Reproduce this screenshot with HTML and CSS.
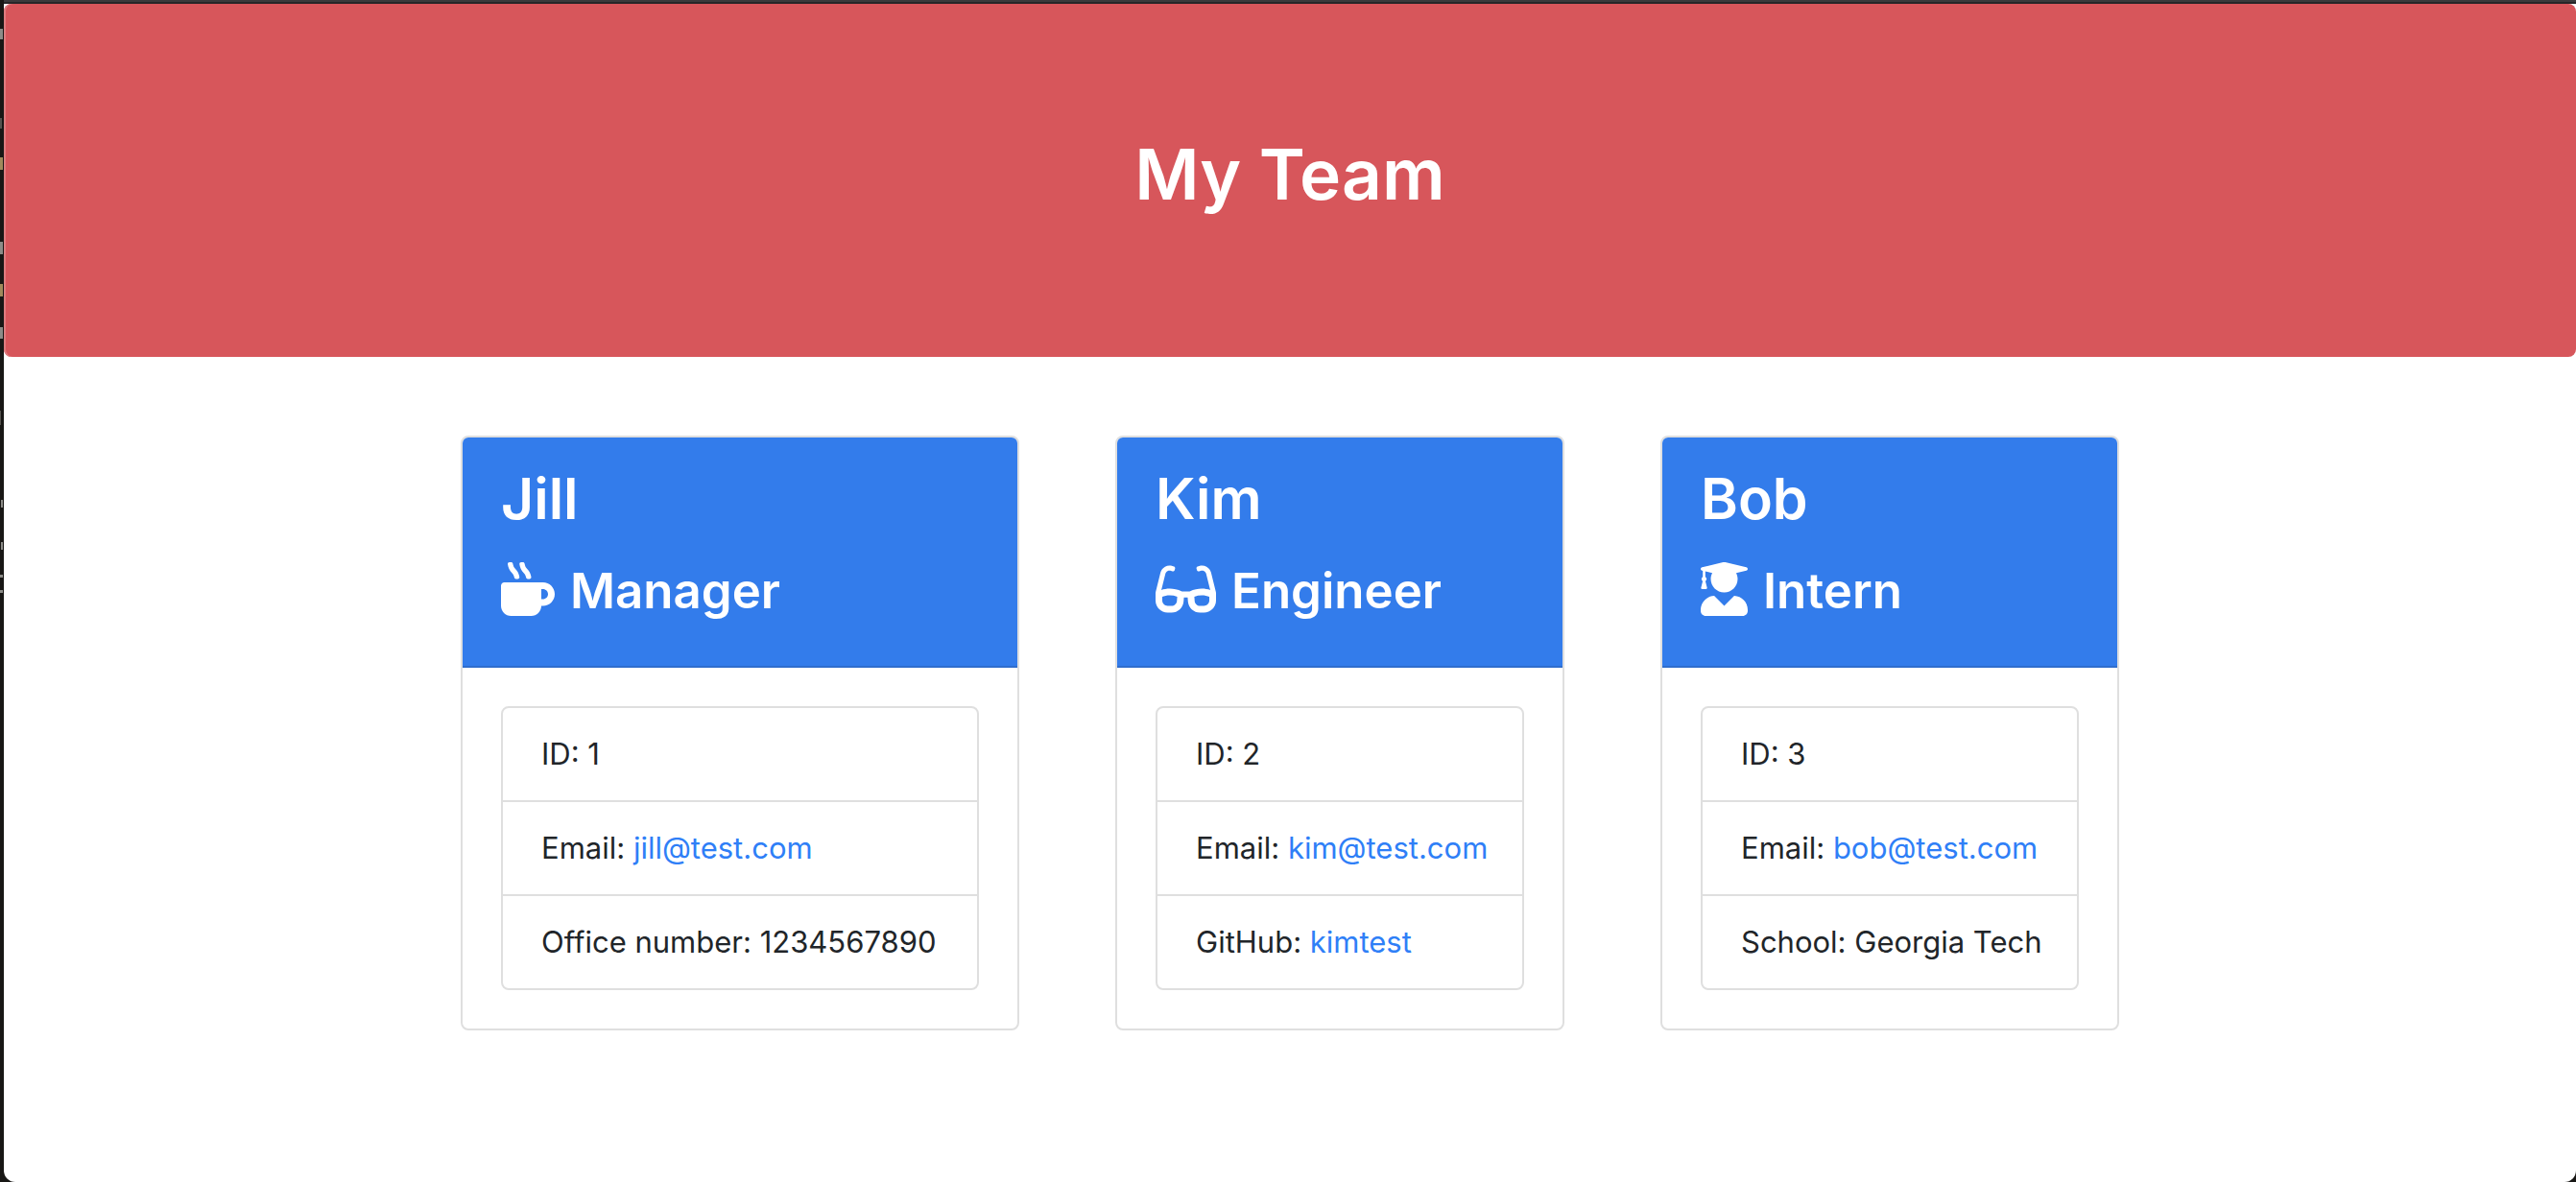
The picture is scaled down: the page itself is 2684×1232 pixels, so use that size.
FILE: index.html
```html
<!DOCTYPE html>
<html lang="en">
<head>
<meta charset="utf-8">
<meta name="viewport" content="width=device-width, initial-scale=1">
<title>My Team</title>
<link rel="stylesheet" href="styles.css">
</head>
<body>
<div class="page">
  <header class="banner">
    <h1 class="banner-title">My Team</h1>
  </header>
  <main class="team">
    <article class="card card-manager">
      <div class="card-header">
        <h2 class="name">Jill</h2>
        <h3 class="role"><svg class="icon" viewBox="0 0 512 512" aria-hidden="true"><path d="M127.1 146.5c1.3 7.7 8 13.5 16 13.5h16.5c9.8 0 17.6-8.5 16.3-18-3.8-28.2-16.4-54.2-36.6-74.7-14.4-14.7-23.6-33.3-26.4-53.5C111.8 5.9 105 0 96.8 0H80.4C70.6 0 63 8.5 64.1 18c3.9 31.9 18 61.3 40.6 84.4 12 12.2 19.7 27.5 22.4 44.1zm112 0c1.3 7.7 8 13.5 16 13.5h16.5c9.8 0 17.6-8.5 16.3-18-3.8-28.2-16.4-54.2-36.6-74.7-14.4-14.7-23.6-33.3-26.4-53.5C223.8 5.9 217 0 208.8 0h-16.4c-9.8 0-17.5 8.5-16.3 18 3.9 31.9 18 61.3 40.6 84.4 12 12.2 19.7 27.5 22.4 44.1zM400 192H32c-17.7 0-32 14.3-32 32v192c0 53 43 96 96 96h192c53 0 96-43 96-96h16c61.8 0 112-50.2 112-112s-50.2-112-112-112zm0 160h-16v-96h16c26.5 0 48 21.5 48 48s-21.5 48-48 48z"/></svg>Manager</h3>
      </div>
      <ul class="details">
        <li class="detail">ID: 1</li>
        <li class="detail">Email: <a class="link" href="mailto:jill@test.com">jill@test.com</a></li>
        <li class="detail">Office number: 1234567890</li>
      </ul>
    </article>
    <article class="card card-engineer">
      <div class="card-header">
        <h2 class="name">Kim</h2>
        <h3 class="role"><svg class="icon" viewBox="0 0 576 512" aria-hidden="true"><path d="M574.1 280.37L528.75 98.66c-5.91-23.7-21.59-44.05-43-55.81-21.44-11.73-46.97-14.11-70.19-6.33l-15.25 5.08c-8.39 2.79-12.92 11.86-10.12 20.24l5.06 15.18c2.79 8.38 11.85 12.91 20.23 10.12l13.18-4.39c10.87-3.62 23-3.57 33.16 1.73 10.29 5.37 17.57 14.56 20.37 25.82l38.46 153.82c-22.19-6.81-49.79-12.46-81.2-12.46-34.77 0-73.98 7.02-114.85 26.74h-73.18c-40.87-19.74-80.08-26.75-114.86-26.75-31.42 0-59.02 5.65-81.21 12.46l38.46-153.83c2.79-11.25 10.09-20.45 20.38-25.81 10.16-5.3 22.28-5.35 33.15-1.73l13.17 4.39c8.38 2.79 17.44-1.74 20.23-10.12l5.06-15.18c2.8-8.38-1.73-17.45-10.12-20.24l-15.25-5.08c-23.22-7.78-48.75-5.41-70.19 6.33-21.41 11.77-37.09 32.11-43 55.8L1.9 280.37A64.218 64.218 0 0 0 0 295.86v70.25C0 429.01 51.58 480 115.2 480h37.12c60.28 0 110.37-45.94 114.88-105.37l2.93-38.63h35.75l2.93 38.63C313.31 434.06 363.4 480 423.68 480h37.12c63.62 0 115.2-50.99 115.2-113.88v-70.25c0-5.23-.64-10.43-1.9-15.5zm-370.72 89.42c-1.97 25.91-24.4 46.21-51.06 46.21H115.2C86.97 416 64 393.62 64 366.11v-37.54c18.12-6.49 43.42-12.92 72.58-12.92 23.86 0 47.26 4.33 69.93 12.92l-3.13 41.22zM512 366.12c0 27.51-22.97 49.88-51.2 49.88h-37.12c-26.67 0-49.1-20.3-51.06-46.21l-3.13-41.22c22.67-8.59 46.08-12.92 69.95-12.92 29.12 0 54.43 6.44 72.55 12.93v37.54z"/></svg>Engineer</h3>
      </div>
      <ul class="details">
        <li class="detail">ID: 2</li>
        <li class="detail">Email: <a class="link" href="mailto:kim@test.com">kim@test.com</a></li>
        <li class="detail">GitHub: <a class="link" href="https://github.com/kimtest">kimtest</a></li>
      </ul>
    </article>
    <article class="card card-intern">
      <div class="card-header">
        <h2 class="name">Bob</h2>
        <h3 class="role"><svg class="icon" viewBox="0 0 448 512" aria-hidden="true"><path d="M319.4 320.6L224 416l-95.4-95.4C57.1 323.7 0 382.2 0 454.4v9.6c0 26.5 21.5 48 48 48h352c26.5 0 48-21.5 48-48v-9.6c0-72.2-57.1-130.7-128.6-133.8zM13.6 79.8l6.4 1.5v58.4c-7 4.2-12 11.5-12 20.3 0 8.4 4.6 15.4 11.1 19.7L3.5 242c-1.7 6.9 2.1 14 7.6 14h41.8c5.5 0 9.3-7.1 7.6-14l-15.6-62.3C51.4 175.4 56 168.4 56 160c0-8.8-5-16.1-12-20.3V87.1l66 15.9c-8.6 17.2-14 36.4-14 57 0 70.7 57.3 128 128 128s128-57.3 128-128c0-20.6-5.3-39.8-14-57l96.3-23.2c18.2-4.4 18.2-27.1 0-31.5l-190.4-46c-13-3.1-26.7-3.1-39.7 0L13.6 48.2c-18.1 4.4-18.1 27.2 0 31.6z"/></svg>Intern</h3>
      </div>
      <ul class="details">
        <li class="detail">ID: 3</li>
        <li class="detail">Email: <a class="link" href="mailto:bob@test.com">bob@test.com</a></li>
        <li class="detail">School: Georgia Tech</li>
      </ul>
    </article>
  </main>
</div>
</body>
</html>
```
FILE: styles.css
```css
* {
  box-sizing: border-box;
}

body {
  margin: 0;
  min-height: 100vh;
  display: flex;
  padding: 4px 0 0 4px;
  /* dark window frame, with slivers of the editor showing at its left edge */
  background:
    linear-gradient(#8c8c88, #8c8c88) 0 30px / 3px 11px no-repeat,
    linear-gradient(#55534f, #55534f) 0 123px / 2px 11px no-repeat,
    linear-gradient(#a08a5c, #a08a5c) 0 164px / 3px 13px no-repeat,
    linear-gradient(#8c8c88, #8c8c88) 0 252px / 3px 13px no-repeat,
    linear-gradient(#a08a5c, #a08a5c) 0 296px / 3px 13px no-repeat,
    linear-gradient(#8c8c88, #8c8c88) 0 341px / 3px 12px no-repeat,
    linear-gradient(#55534f, #55534f) 0 428px / 1px 15px no-repeat,
    linear-gradient(#8c8c88, #8c8c88) 1px 521px / 2px 8px no-repeat,
    linear-gradient(#8c8c88, #8c8c88) 1px 565px / 2px 8px no-repeat,
    linear-gradient(#8c8c88, #8c8c88) 0 599px / 3px 3px no-repeat,
    linear-gradient(#8c8c88, #8c8c88) 0 615px / 3px 3px no-repeat,
    linear-gradient(#3a3a3c 2px, #262628 2px) 4px 0 / 100% 4px no-repeat,
    #181715;
  font-family: Inter, "Liberation Sans", sans-serif;
  font-size: 31px;
  line-height: 48px;
  color: #212529;
}

.page {
  flex: 1;
  background: #fff;
  border-radius: 0 0 12px 12px;
}

.banner {
  padding: 128px 64px;
  border-radius: 8px;
  background: #d7565b;
  box-shadow: inset 2px 0 #df7b7f;
  text-align: center;
}

.banner-title {
  margin: 0 0 12px;
  font-size: 73px;
  font-weight: 600;
  line-height: 100px;
  color: #fff;
}

.team {
  display: flex;
  flex-wrap: wrap;
  justify-content: center;
  gap: 82px 100px;
  padding: 82px 32px;
}

.card {
  border: 2px solid #dfdfdf;
  border-radius: 8px;
  overflow: hidden;
}

.card-manager {
  flex: 0 1 582px;
}

.card-engineer {
  flex: 0 1 468px;
}

.card-intern {
  flex: 0 1 478px;
}

.card-header {
  padding: 26px 40px 44px;
  border-bottom: 2px solid #2f6dcd;
  background: #337ceb;
  color: #fff;
}

.name,
.role {
  margin: 0;
  font-weight: 600;
}

.name {
  margin-bottom: 24px;
  font-size: 59px;
  line-height: 76px;
}

.role {
  display: flex;
  align-items: center;
  gap: 16px;
  font-size: 51px;
  line-height: 68px;
}

.icon {
  height: 56px;
  margin-bottom: 4px;
  fill: currentColor;
}

.details {
  margin: 40px;
  padding: 0;
  list-style: none;
  border: 2px solid #dfdfdf;
  border-radius: 8px;
}

.detail {
  padding: 24px 32px 24px 40px;
}

.detail + .detail {
  border-top: 2px solid #dfdfdf;
}

.link {
  color: #2f7ff7;
  text-decoration: none;
}
```
